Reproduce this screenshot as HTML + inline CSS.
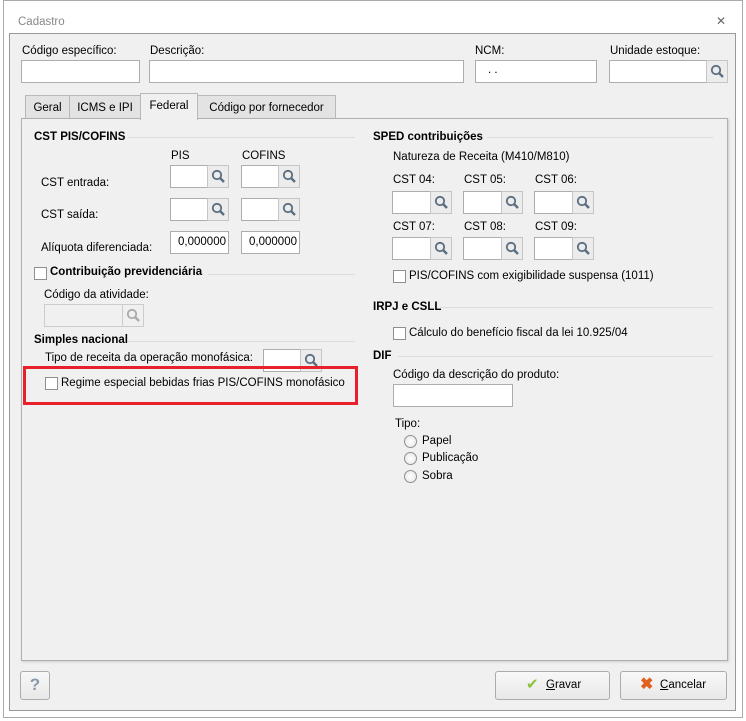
<!DOCTYPE html>
<html><head><meta charset="utf-8"><style>
*{box-sizing:border-box;margin:0;padding:0}
body{width:746px;height:721px;background:#fff;font-family:"Liberation Sans",sans-serif;font-size:11.5px;line-height:15px;color:#000;position:relative;overflow:hidden;white-space:nowrap}
.a{position:absolute}
.win{left:3px;top:0;width:740px;height:718px;border:1px solid #aaa;background:#fff}
.body{left:9px;top:33px;width:727px;height:678px;background:#f0f0f0;border:1px solid #999}
.inp{position:absolute;background:#fff;border:1px solid #abadb3;height:23px}
.btn{position:absolute;top:-1px;right:-1px;width:22px;height:23px;background:#ececec;border:1px solid #c5c5c5}
.btn svg{position:absolute;left:3px;top:3px}
.b{font-weight:bold}
.line{position:absolute;height:1px;background:#dcdcdc}
.cb{position:absolute;width:13px;height:13px;border:1px solid #8f8f8f;background:#fff}
.rd{position:absolute;width:13px;height:13px;border:1px solid #8f8f8f;border-radius:50%;background:radial-gradient(#fff,#e4e4e4)}
.tab{position:absolute;top:95px;height:24px;border:1px solid #b8b8b8;background:#e3e3e3;padding:5px 0 0;text-align:center}
.pb{position:absolute;border:1px solid #acacac;border-radius:3px;background:linear-gradient(#f8f8f8,#e8e8e8)}
</style></head><body>
<div class="a win"></div>
<div class="a" style="left:18px;top:15px;color:#888">Cadastro</div>
<div class="a" style="left:716px;top:14px;color:#666;font-size:12px">✕</div>
<div class="a body"></div>

<div class="a" style="left:22px;top:44px">Código específico:</div>
<div class="a" style="left:150px;top:44px">Descrição:</div>
<div class="a" style="left:475px;top:44px">NCM:</div>
<div class="a" style="left:610px;top:44px">Unidade estoque:</div>
<div class="inp" style="left:21px;top:60px;width:119px"></div>
<div class="inp" style="left:149px;top:60px;width:315px"></div>
<div class="inp" style="left:475px;top:60px;width:122px"><span class="a" style="left:12px;top:2px">. .</span></div>
<div class="inp" style="left:609px;top:60px;width:119px"><div class="btn"><svg width="15" height="15"><circle cx="6" cy="6" r="4.2" fill="none" stroke="#5a6e80" stroke-width="1.8"/><line x1="9" y1="9" x2="13" y2="13" stroke="#5a6e80" stroke-width="2.4"/></svg></div></div>

<div class="tab" style="left:25px;width:45px">Geral</div>
<div class="tab" style="left:69px;width:72px">ICMS e IPI</div>
<div class="tab" style="left:197px;width:139px">Código por fornecedor</div>
<div class="a" style="left:21px;top:118px;width:707px;height:543px;border:1px solid #b0b0b0;background:#f0f0f0;box-shadow:1px 1px 2px #ccc"></div>
<div class="tab" style="left:140px;top:93px;width:58px;height:27px;background:#f0f0f0;border-bottom:none;padding-top:5px">Federal</div>

<div class="a b" style="left:34px;top:130px">CST PIS/COFINS</div><div class="line" style="left:128px;top:137px;width:227px"></div>
<div class="a" style="left:171px;top:149px">PIS</div><div class="a" style="left:242px;top:149px">COFINS</div>
<div class="a" style="left:41px;top:176px">CST entrada:</div>
<div class="a" style="left:41px;top:208px">CST saída:</div>
<div class="a" style="left:41px;top:241px">Alíquota diferenciada:</div>
<div id="s1"></div>
<div class="inp" style="left:170px;top:231px;width:59px;text-align:right;padding:3px 2px 0 0">0,000000</div>
<div class="inp" style="left:241px;top:231px;width:59px;text-align:right;padding:3px 2px 0 0">0,000000</div>
<div class="cb" style="left:34px;top:267px"></div><div class="a b" style="left:50px;top:265px">Contribuição previdenciária</div><div class="line" style="left:208px;top:274px;width:147px"></div>
<div class="a" style="left:44px;top:288px">Código da atividade:</div>
<div class="inp" style="left:44px;top:304px;width:100px;background:#f0f0f0;border-color:#ccc"><div class="btn" style="background:#f0f0f0;border-color:#ccc"><svg width="15" height="15"><circle cx="6" cy="6" r="4.2" fill="none" stroke="#aaa" stroke-width="1.8"/><line x1="9" y1="9" x2="13" y2="13" stroke="#aaa" stroke-width="2.4"/></svg></div></div>
<div class="a b" style="left:34px;top:333px">Simples nacional</div><div class="line" style="left:128px;top:341px;width:227px"></div>
<div class="a" style="left:45px;top:351px">Tipo de receita da operação monofásica:</div>
<div class="a" style="left:23px;top:366px;width:335px;height:39px;border:3px solid #e8202a"></div>
<div class="cb" style="left:45px;top:377px"></div><div class="a" style="left:61px;top:376px">Regime especial bebidas frias PIS/COFINS monofásico</div>

<div class="a b" style="left:373px;top:130px">SPED contribuições</div><div class="line" style="left:487px;top:137px;width:226px"></div>
<div class="a" style="left:393px;top:150px">Natureza de Receita (M410/M810)</div>
<div class="a" style="left:393px;top:173px">CST 04:</div><div class="a" style="left:464px;top:173px">CST 05:</div><div class="a" style="left:535px;top:173px">CST 06:</div>
<div class="a" style="left:393px;top:220px">CST 07:</div><div class="a" style="left:464px;top:220px">CST 08:</div><div class="a" style="left:535px;top:220px">CST 09:</div>
<div class="cb" style="left:393px;top:270px"></div><div class="a" style="left:409px;top:269px">PIS/COFINS com exigibilidade suspensa (1011)</div>
<div class="a b" style="left:373px;top:300px">IRPJ e CSLL</div><div class="line" style="left:440px;top:307px;width:273px"></div>
<div class="cb" style="left:393px;top:327px"></div><div class="a" style="left:409px;top:326px">Cálculo do benefício fiscal da lei 10.925/04</div>
<div class="a b" style="left:373px;top:349px">DIF</div><div class="line" style="left:398px;top:356px;width:315px"></div>
<div class="a" style="left:393px;top:368px">Código da descrição do produto:</div>
<div class="inp" style="left:393px;top:384px;width:120px"></div>
<div class="a" style="left:395px;top:417px">Tipo:</div>
<div class="rd" style="left:404px;top:435px"></div><div class="a" style="left:422px;top:434px">Papel</div>
<div class="rd" style="left:404px;top:452px"></div><div class="a" style="left:422px;top:451px">Publicação</div>
<div class="rd" style="left:404px;top:470px"></div><div class="a" style="left:422px;top:469px">Sobra</div>

<div class="pb" style="left:20px;top:671px;width:30px;height:29px;color:#8a9aaa;font-weight:bold;font-size:17px;text-align:center;padding-top:5px">?</div>
<div class="pb" style="left:495px;top:671px;width:115px;height:29px"><span style="color:#8cc43c;font-size:15px;position:absolute;left:30px;top:5px">✔</span><span style="position:absolute;left:50px;top:6px"><u>G</u>ravar</span></div>
<div class="pb" style="left:620px;top:671px;width:107px;height:29px"><span style="color:#e06020;font-size:16px;font-weight:bold;position:absolute;left:19px;top:5px">✖</span><span style="position:absolute;left:39px;top:6px"><u>C</u>ancelar</span></div>

<script>
var s=document.getElementById('s1'),h='';
function f(x,y,w){h+='<div class="inp" style="left:'+x+'px;top:'+y+'px;width:'+w+'px"><div class="btn"><svg width="15" height="15"><circle cx="6" cy="6" r="4.2" fill="none" stroke="#5a6e80" stroke-width="1.8"/><line x1="9" y1="9" x2="13" y2="13" stroke="#5a6e80" stroke-width="2.4"/></svg></div></div>';}
f(170,165,59);f(241,165,59);f(170,198,59);f(241,198,59);f(263,349,59);
f(392,191,60);f(463,191,60);f(534,191,60);f(392,237,60);f(463,237,60);f(534,237,60);
s.outerHTML=h;
</script>
</body></html>
